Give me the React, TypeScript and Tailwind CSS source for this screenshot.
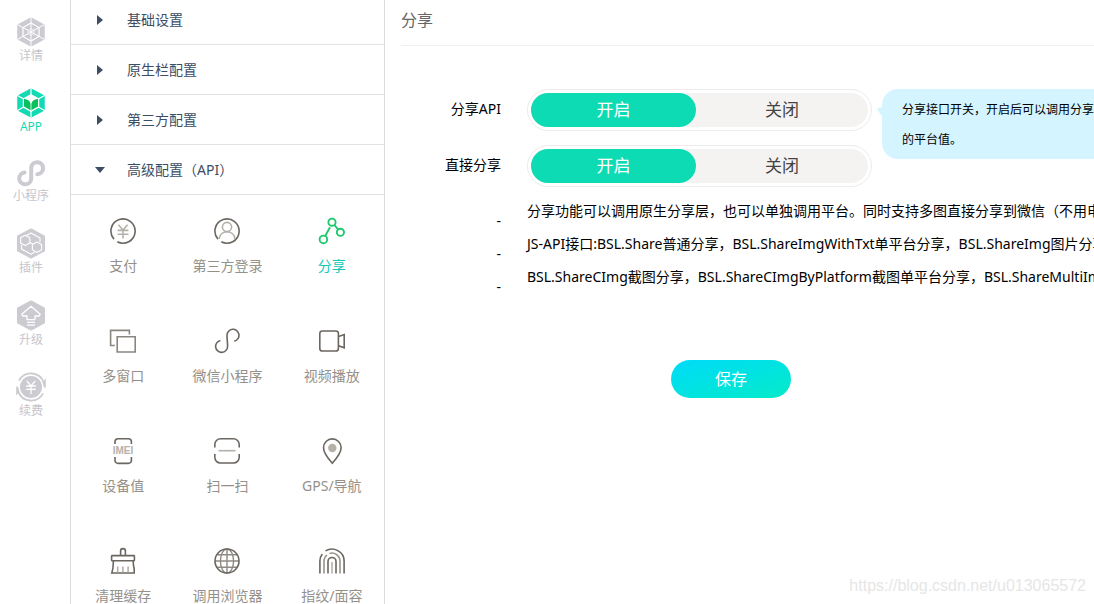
import React, { useState } from "react";

const DARK = "#6b6760";
const LIGHT = "#b5b1aa";

type Item = { label: string; icon: React.ReactNode };

// Left navigation icons
const NavSvg: React.FC<{ h: number; children: React.ReactNode }> = ({ h, children }) => (
  <svg width="30" height={h} viewBox={`0 0 30 ${h}`} fill="none" aria-hidden="true">
    {children}
  </svg>
);

const navItems: (Item & { active?: boolean })[] = [
  {
    label: "详情",
    icon: (
      <NavSvg h={30}>
        <path d="M15 .8 28.2 7.8V22.2L15 29.2 1.8 22.2V7.8Z" fill="#cccbd1" stroke="#cccbd1" strokeLinejoin="round" />
        <path d="M15 0V30M1 7.3 29 22.7M29 7.3 1 22.7" stroke="#fff" strokeWidth="1" />
        <path d="M15 6 23 10.5V19.5L15 24 7 19.5V10.5Z" stroke="#fff" strokeWidth="1.2" />
        <path d="M15 11.6 18 13.3V16.7L15 18.4 12 16.7V13.3Z" stroke="#fff" strokeWidth=".6" />
      </NavSvg>
    ),
  },
  {
    label: "APP",
    active: true,
    icon: (
      <NavSvg h={30}>
        <path d="M15 .8 28.2 7.8V22.2L15 29.2 1.8 22.2V7.8Z" fill="#12dab3" stroke="#12dab3" strokeLinejoin="round" />
        <path d="M15 0V30M1 7.3 29 22.7M29 7.3 1 22.7" stroke="#fff" strokeWidth="1.2" />
        <path d="M15 6 23.2 10.5V19.5L15 24 6.8 19.5V10.5Z" fill="#fff" />
        <path d="M8 10.8C12 11.3 14.3 13.3 14.6 16V22.2L8 18.6ZM22 10.8C18 11.3 15.7 13.3 15.4 16V22.2L22 18.6Z" fill="#0bbf5c" />
      </NavSvg>
    ),
  },
  {
    label: "小程序",
    icon: (
      <NavSvg h={28}>
        <path
          d="M21.3 15.2A6 6 0 1 0 15.2 8.2V19.8A6 6 0 1 1 8.6 13.4"
          stroke="#cccbd1"
          strokeWidth="4"
          strokeLinecap="round"
        />
      </NavSvg>
    ),
  },
  {
    label: "插件",
    icon: (
      <NavSvg h={31}>
        <path d="M15 1.5 28 8.5V22.5L15 29.5 2 22.5V8.5Z" fill="#cccbd1" stroke="#cccbd1" strokeWidth="2" strokeLinejoin="round" />
        <g stroke="#fff" strokeWidth="1.1" strokeLinejoin="round">
          <path d="M10.5 7.5 15 5 24 10V14M5.5 17V21L15 26.3 18.5 24.2" />
          <path d="M4.6 9.8 9.2 7.2 13.8 9.8V15L9.2 17.6 4.6 15Z" />
          <path d="M16.4 16.6 21 14 25.6 16.6V21.8L21 24.4 16.4 21.8Z" />
          <path d="M13.8 14.5 17 16.3" />
        </g>
      </NavSvg>
    ),
  },
  {
    label: "升级",
    icon: (
      <NavSvg h={31}>
        <path d="M15 1.5 28 8.5V22.5L15 29.5 2 22.5V8.5Z" fill="#cccbd1" stroke="#cccbd1" strokeWidth="2" strokeLinejoin="round" />
        <path
          d="M15 6.2 24.2 14.2 23.2 16H19V19.6H11V16H6.8L5.8 14.2ZM11 22.4H19M11 25.2H19"
          stroke="#fff"
          strokeWidth="1.3"
          strokeLinejoin="round"
        />
      </NavSvg>
    ),
  },
  {
    label: "续费",
    icon: (
      <NavSvg h={30}>
        <circle cx="15" cy="15" r="11" fill="#cccbd1" />
        <path d="M3 8.6A13.6 13.6 0 0 1 27.8 10.6M27 21.4A13.6 13.6 0 0 1 2.2 19.4" stroke="#cccbd1" strokeWidth="1.8" />
        <path d="M26.6 10.5 29.8 6.2V15.5H28ZM3.4 19.5.2 23.8V14.5H2Z" fill="#cccbd1" />
        <path d="M10.8 8.8 15 14 19.2 8.8M10.2 14H19.8M10.2 17.4H19.8M15 14V22" stroke="#fff" strokeWidth="1.3" />
      </NavSvg>
    ),
  },
];

// Feature icons
const Icon: React.FC<{ children: React.ReactNode }> = ({ children }) => (
  <svg width="28" height="28" viewBox="0 0 28 28" fill="none" stroke={DARK} strokeWidth="1.6" aria-hidden="true">
    {children}
  </svg>
);

const features: Item[] = [
  {
    label: "支付",
    icon: (
      <Icon>
        <path d="M8.3 24.7A12.1 12.1 0 1 0 5 22.1" />
        <path d="M9.4 7.8 14 13 18.6 7.8M8.6 13.4H19.4M8.6 17.3H19.4M14 13V21.6" stroke={LIGHT} />
      </Icon>
    ),
  },
  {
    label: "第三方登录",
    icon: (
      <Icon>
        <path d="M8.3 24.7A12.1 12.1 0 1 0 5 22.1" />
        <circle cx="14" cy="10" r="4.6" stroke={LIGHT} />
        <path d="M6.2 22C7 12.3 21 12.3 22 22" stroke={LIGHT} />
      </Icon>
    ),
  },
  {
    label: "分享",
    icon: (
      <Icon>
        <g stroke="#1fc96c" strokeWidth="1.9">
          <circle cx="14" cy="5.2" r="3.6" />
          <circle cx="22.4" cy="15.3" r="3.6" />
          <circle cx="5.4" cy="22.4" r="3.8" />
          <path d="M7.2 19 12 10.2M16.4 8 20 12.3" />
        </g>
      </Icon>
    ),
  },
  {
    label: "多窗口",
    icon: (
      <Icon>
        <g stroke="#8b8780">
          <path d="M5.8 18.5H1.6V3.4H20.4V7.6" />
          <path d="M8.2 9.8H26.2V25H8.2Z" />
        </g>
      </Icon>
    ),
  },
  {
    label: "微信小程序",
    icon: (
      <Icon>
        <path d="M21.4 14.1A6 6 0 1 0 14 8.3C14 12 14.6 15.5 14.6 19.5A6 6 0 1 1 7.4 13.5" />
      </Icon>
    ),
  },
  {
    label: "视频播放",
    icon: (
      <Icon>
        <rect x="1.8" y="4" width="18.6" height="20" rx="2.6" />
        <path d="M20.6 9.6 26.2 7.6V20.8L20.6 18.8" />
      </Icon>
    ),
  },
  {
    label: "设备值",
    icon: (
      <Icon>
        <path d="M6 7V4.8A3 3 0 0 1 9 1.8H19.4A3 3 0 0 1 22.4 4.8V7M6 20V23.4A3 3 0 0 0 9 26.4H19.4A3 3 0 0 0 22.4 23.4V20" />
        <text
          x="14"
          y="17"
          textAnchor="middle"
          fontSize="10"
          fontWeight="700"
          fontFamily="Liberation Sans, sans-serif"
          fill={LIGHT}
          stroke="none"
        >
          IMEI
        </text>
      </Icon>
    ),
  },
  {
    label: "扫一扫",
    icon: (
      <Icon>
        <path d="M1.8 10.5V7.5A5.7 5.7 0 0 1 7.5 1.8H20.5A5.7 5.7 0 0 1 26.2 7.5V10.5M1.8 17V20.3A5.7 5.7 0 0 0 7.5 26H20.5A5.7 5.7 0 0 0 26.2 20.3V17" />
        <path d="M5.5 13.7H22.5" stroke={LIGHT} />
      </Icon>
    ),
  },
  {
    label: "GPS/导航",
    icon: (
      <Icon>
        <path d="M14.3 26.2C11 22.5 5.5 16 5.5 10.7A8.8 8.8 0 0 1 23.1 10.7C23.1 16 17.6 22.5 14.3 26.2Z" />
        <circle cx="14.3" cy="11" r="4.2" fill={LIGHT} stroke="none" />
      </Icon>
    ),
  },
  {
    label: "清理缓存",
    icon: (
      <Icon>
        <path d="M11.6 8.6V4A2.4 2.4 0 0 1 16.4 4V8.6" />
        <rect x="2.6" y="8.6" width="22.8" height="5.2" rx=".6" />
        <path d="M4.4 14C4.4 19 4 22.5 2.8 26H25.2V22C24.6 20 24.2 17 24.2 14" />
        <path d="M8.7 19.5V25.2M13.9 19.5V25.2M19.1 19.5V25.2" stroke={LIGHT} />
      </Icon>
    ),
  },
  {
    label: "调用浏览器",
    icon: (
      <Icon>
        <g stroke="#8f8b84" strokeWidth="1.4">
          <ellipse cx="14" cy="14" rx="6.6" ry="12" />
          <path d="M14 2V26M2 14H26M4 7.8H24M4 20.2H24" />
        </g>
        <circle cx="14" cy="14" r="12" />
      </Icon>
    ),
  },
  {
    label: "指纹/面容",
    icon: (
      <Icon>
        <path d="M1.9 26.5V14C1.9 11.3 2.7 9 4.3 7M7.5 3.9C15.5-.8 26.1 4.5 26.1 14V26.500" />
        <path d="M6 26.5V14A8 8 0 0 1 9 8M11.5 6.5A8 8 0 0 1 22 14V26.5" stroke="#98948c" />
        <path d="M10 26.5V14.5A4 4 0 0 1 18 14.5V26.5" />
        <path d="M14 15V26.5" stroke={LIGHT} />
      </Icon>
    ),
  },
];

const sections = [
  { label: "基础设置", open: false },
  { label: "原生栏配置", open: false },
  { label: "第三方配置", open: false },
  { label: "高级配置（API）", open: true },
];

const Toggle: React.FC<{ name: string; label: string }> = ({ name, label }) => {
  const [on, setOn] = useState(true);
  return (
    <div
      role="radiogroup"
      aria-label={label}
      className="flex h-[42px] w-[345px] shrink-0 rounded-full border border-[#ececec] p-[3px]"
    >
      <div className="flex flex-1 rounded-full bg-[#f4f3f2] text-[17px] text-[#444]">
        <label className="flex w-[165px] cursor-pointer items-center justify-center rounded-full has-checked:bg-[#0ddbb4] has-checked:text-white">
          <input type="radio" name={name} checked={on} onChange={() => setOn(true)} className="sr-only" />
          开启
        </label>
        <label className="flex flex-1 cursor-pointer items-center justify-center rounded-full has-checked:bg-[#0ddbb4] has-checked:text-white">
          <input type="radio" name={name} checked={!on} onChange={() => setOn(false)} className="sr-only" />
          关闭
        </label>
      </div>
    </div>
  );
};

const notes = [
  "分享功能可以调用原生分享层，也可以单独调用平台。同时支持多图直接分享到微信（不用电",
  "JS-API接口:BSL.Share普通分享，BSL.ShareImgWithTxt单平台分享，BSL.ShareImg图片分享",
  "BSL.ShareCImg截图分享，BSL.ShareCImgByPlatform截图单平台分享，BSL.ShareMultiImg",
];

const App: React.FC = () => {
  return (
    <div className="relative flex h-screen overflow-hidden bg-white font-['Noto_Sans','Noto_Sans_CJK_SC',sans-serif] text-sm text-black">
      <nav className="w-[71px] shrink-0 border-r border-[#dcdcdc] pt-[17px] pr-2">
        <ul className="flex flex-col gap-[23px]">
          {navItems.map((item) => (
            <li key={item.label}>
              <a
                href="#"
                className={`flex flex-col items-center text-xs leading-[18px] ${
                  item.active ? "text-[#12dab3]" : "text-[#c6c5cb]"
                }`}
              >
                {item.icon}
                {item.label}
              </a>
            </li>
          ))}
        </ul>
      </nav>

      <aside className="w-[314px] shrink-0 border-r border-[#dcdcdc]">
        {sections.map((section) => (
          <button
            key={section.label}
            type="button"
            aria-expanded={section.open}
            className="flex h-[50px] w-full items-center gap-[22px] border-b border-[#e2e2e2] pl-6 text-[#3d4d63] first:h-[45px] first:pb-1"
          >
            <svg width="10" height="10" viewBox="0 0 10 10" fill="#3d4d63" aria-hidden="true">
              {section.open ? <path d="M0 2H10L5 8Z" /> : <path d="M2 0V10L8 5Z" />}
            </svg>
            {section.label}
          </button>
        ))}
        <div className="grid grid-cols-3">
          {features.map((item) => (
            <a
              key={item.label}
              href="#"
              className={`flex h-[110px] flex-col items-center gap-[11px] pt-[22px] leading-5 ${
                item.label === "分享" ? "text-[#0fc9b4]" : "text-[#95918a]"
              }`}
            >
              {item.icon}
              {item.label}
            </a>
          ))}
        </div>
      </aside>

      <main className="min-w-0 flex-1 overflow-hidden pl-4">
        <h1 className="h-[46px] border-b border-[#f0f0f0] pt-2 text-base leading-6 text-[#666]">分享</h1>

        <form className="pt-[43px]" onSubmit={(e) => e.preventDefault()}>
          <div className="flex h-14 gap-[26px]">
            <span className="w-[100px] shrink-0 text-right leading-10">分享API</span>
            <Toggle name="share-api" label="分享API" />
            <div className="relative -ml-4 h-[70px] flex-1 rounded-l-2xl bg-[#d4f5ff] pt-1.5 pl-5 text-xs leading-[30px] whitespace-nowrap">
              <svg
                className="absolute top-[18px] -left-[5px]"
                width="6"
                height="10"
                viewBox="0 0 6 10"
                fill="#d4f5ff"
                aria-hidden="true"
              >
                <path d="M0 1Q3 1 6 0V10Q1 5 0 1Z" />
              </svg>
              分享接口开关，开启后可以调用分享
              <br />
              的平台值。
            </div>
          </div>
          <div className="flex gap-[26px]">
            <span className="w-[100px] shrink-0 text-right leading-10">直接分享</span>
            <Toggle name="share-direct" label="直接分享" />
          </div>

          <div className="pt-2">
            {notes.map((note) => (
              <div key={note} className="flex h-[33px] gap-[26px] leading-8 whitespace-nowrap">
                <span className="w-[100px] shrink-0 pt-2.5 text-right">-</span>
                <p>{note}</p>
              </div>
            ))}
          </div>

          <button
            type="submit"
            className="mt-[66px] ml-[270px] h-[38px] w-[120px] rounded-full bg-linear-to-br from-[#00dbf8] to-[#0aeac8] text-base text-white"
          >
            保存
          </button>
        </form>
      </main>

      <span className="absolute right-2 bottom-1.5 font-['Liberation_Sans',sans-serif] text-base text-[#e6e6e6]">
        https://blog.csdn.net/u013065572
      </span>
    </div>
  );
};

export default App;
